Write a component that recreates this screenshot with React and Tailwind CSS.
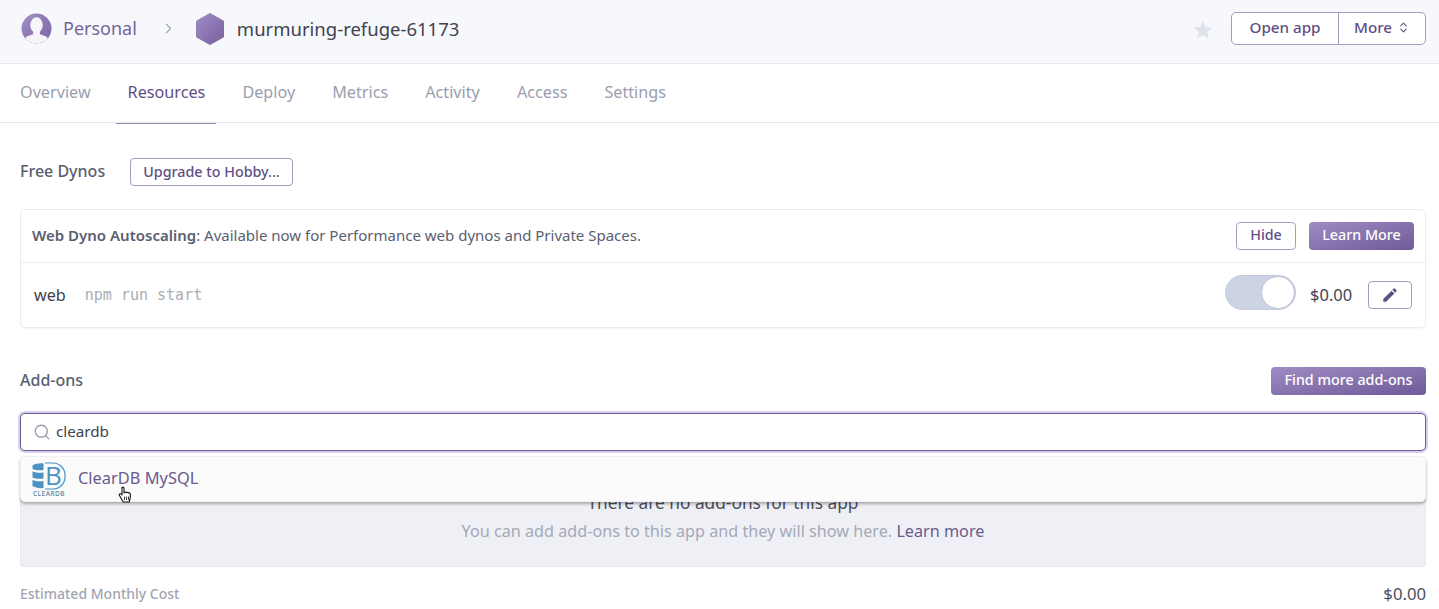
import React from "react";
import { ChevronRight, ChevronsUpDown, Search } from "lucide-react";
import { MdEdit } from "react-icons/md";

const tabs = ["Overview", "Resources", "Deploy", "Metrics", "Activity", "Access", "Settings"];

const purpleBtn =
  "rounded-[4px] bg-gradient-to-br from-[#a08cc4] to-[#6f5a98] text-white text-[14.300px] font-medium flex items-center justify-center pb-[2px]";
const outlineBtn =
  "rounded-[4px] border border-[#a79cc0] bg-white text-[#5f4f85] text-[14.300px] font-medium flex items-center justify-center";

const Avatar = () => (
  <svg width="31" height="31" viewBox="0 0 32 32" className="shrink-0">
    <defs>
      <linearGradient id="av" x1="0" y1="0" x2="1" y2="1">
        <stop offset="0" stopColor="#a48fc6" />
        <stop offset="1" stopColor="#7a63a3" />
      </linearGradient>
      <clipPath id="avc">
        <circle cx="16" cy="16" r="15.5" />
      </clipPath>
    </defs>
    <circle cx="16" cy="16" r="15.5" fill="url(#av)" />
    <g clipPath="url(#avc)" fill="#f6f5fa">
      <ellipse cx="16" cy="12.500" rx="6.500" ry="8" />
      <path d="M12.500 18h7v4c3 1.500 6.500 1.500 8 3.500v7h-23v-7c1.500-2 5-2 8-3.500z" />
    </g>
  </svg>
);

const Hexagon = () => (
  <svg width="30" height="32" viewBox="0 0 30 32" className="shrink-0">
    <defs>
      <linearGradient id="hex" x1="0" y1="0" x2="1" y2="1">
        <stop offset="0" stopColor="#a08cc4" />
        <stop offset="1" stopColor="#76609f" />
      </linearGradient>
    </defs>
    <path d="M15 0.500 28.500 8v16L15 31.500 1.500 24V8z" fill="url(#hex)" strokeLinejoin="round" stroke="url(#hex)" />
  </svg>
);

const ClearDbLogo = () => (
  <div className="relative w-[34px] h-[36px] shrink-0">
    <svg width="34" height="28" viewBox="0 0 34 28" className="absolute left-0 top-0">
      <path d="M13 1h8a12 12 0 0 1 12 12v2a12 12 0 0 1-12 12H13" fill="none" stroke="#4a93c2" strokeWidth="1.200" />
      <g fill="#4a93c2">
        <path d="M0.500 3.500c2-1.500 7-2.500 11-2v6.500c-4 .6-8.500.2-11-1z" />
        <path d="M0.500 9.500c3 1.200 7.500 1.500 11 1v6c-4 .6-8.500.2-11-1z" />
        <path d="M0.500 18c3 1.200 7.500 1.500 11 1v7c-4 .5-9-.5-11-2z" />
      </g>
    </svg>
    <span className="absolute left-[13px] top-0 text-[26px] leading-[26px] text-[#4a93c2] font-['Open_Sans',sans-serif]">B</span>
    <span className="absolute left-[-1px] top-[28px] w-[36px] text-center text-[6.500px] leading-[8px] tracking-[0.5px] font-medium text-[#5d7f98]">CLEARDB</span>
  </div>
);

const HandCursor = () => (
  <svg width="15" height="18" viewBox="0 0 15 18" className="absolute left-[118px] top-[486px]">
    <path
      d="M4 1.500c.8-.8 2-.4 2 .8V7l.5-.6c.6-.5 1.500-.4 1.900.2.600-.5 1.500-.3 1.900.3.700-.4 1.700-.1 1.900.8.300 1.800.2 4-.4 5.800l-.6 2.500H5.200L1.500 9.500c-.6-1-.1-1.800.8-1.800.5 0 1 .3 1.700 1.100z"
      fill="#fff"
      stroke="#111"
      strokeWidth="1.100"
      strokeLinejoin="round"
    />
    <path d="M6.500 10.500v3.500M8.500 10.500v3.500M10.500 10.500v3.500" stroke="#111" strokeWidth="0.800" />
  </svg>
);

const App = () => {
  return (
    <div className="relative w-[1439px] h-[609px] overflow-hidden bg-white font-['Noto_Sans',sans-serif]">
      {/* app header */}
      <header className="h-[64px] bg-[#f7f8fb] border-b border-[#e6e8ee] flex items-center pl-[21px] pr-[13px] pb-[6px]">
        <Avatar />
        <span className="ml-[11px] text-[18px] text-[#75649b]">Personal</span>
        <ChevronRight size={17} strokeWidth={1.500} className="ml-[23px] text-[#9fa4b2]" />
        <div className="ml-[18px]">
          <Hexagon />
        </div>
        <span className="ml-[12px] text-[18.500px] text-[#3f4350]">murmuring-refuge-61173</span>
        <div className="ml-auto flex items-center">
          <svg width="20" height="20" viewBox="0 0 20 20" className="mr-[18px] mt-[2px]">
            <path d="M10 1l2.700 6.100 6.600.6-5 4.400 1.500 6.500L10 15.200 4.200 18.600l1.500-6.500-5-4.400 6.600-.6z" fill="#dfe2eb" />
          </svg>
          <div className="flex h-[33px] rounded-[5px] border border-[#a79cc0] bg-white text-[15.200px] font-medium text-[#5f4f85]">
            <span className="w-[107px] flex items-center justify-center border-r border-[#a79cc0] pb-[2px]">Open app</span>
            <span className="w-[86px] flex items-center justify-center gap-[5px] pb-[2px]">
              More <ChevronsUpDown size={13} strokeWidth={2} />
            </span>
          </div>
        </div>
      </header>

      {/* tabs */}
      <nav className="h-[59px] border-b border-[#e6e8ee] flex pl-[20px] gap-[37px] text-[16.200px] text-[#9a9eae]">
        {tabs.map((t) => (
          <div key={t} className={"relative flex items-center h-[59px] pb-[2px] " + (t === "Resources" ? "text-[#5f4f85]" : "")}>
            {t}
            {t === "Resources" && <div className="absolute left-[-12px] right-[-11px] bottom-[-1px] h-px bg-[#9b8cb8]" />}
          </div>
        ))}
      </nav>

      <main className="pl-[20px] pr-[13px]">
        {/* dynos */}
        <div className="mt-[35px] flex items-center h-[28px]">
          <h2 className="w-[86px] pb-[2px] text-[16px] font-medium text-[#596070] whitespace-nowrap">Free Dynos</h2>
          <button className={outlineBtn + " ml-[24px] w-[163px] h-[28px]"}>Upgrade to Hobby...</button>
        </div>

        <section className="mt-[23px] h-[119px] rounded-[5px] border border-[#e9ebf0] shadow-[0_1px_1px_rgba(0,0,0,0.03)]">
          <div className="h-[53px] border-b border-[#eceef2] flex items-center pl-[11px] pr-[11px] text-[15px] text-[#596070]">
            <span className="pb-[1px]">
              <b className="font-semibold">Web Dyno Autoscaling</b>: Available now for Performance web dynos and Private Spaces.
            </span>
            <button className={outlineBtn + " ml-auto w-[60px] h-[28px] pb-[2px]"}>Hide</button>
            <button className={purpleBtn + " ml-[13px] w-[105px] h-[28px]"}>Learn More</button>
          </div>
          <div className="h-[64px] flex items-center pl-[13px] pr-[13px]">
            <span className="text-[16.200px] text-[#3f4350]">web</span>
            <span className="ml-[19px] text-[15px] text-[#a9adb5] font-['DejaVu_Sans_Mono',monospace]">npm run start</span>
            <div className="ml-auto mb-[5px] w-[71px] h-[35px] rounded-full bg-[#ccd4e3] border border-[#c3cbdc] flex justify-end">
              <div className="w-[34px] h-[33px] rounded-full bg-white border border-[#b9c2d5]" />
            </div>
            <span className="ml-[14px] w-[45px] text-[16.500px] text-[#3f4350]">$0.00</span>
            <button className={outlineBtn + " ml-[13px] w-[44px] h-[28px]"}>
              <MdEdit size={18} />
            </button>
          </div>
        </section>

        {/* add-ons */}
        <div className="mt-[39px] flex items-center justify-between h-[28px]">
          <h2 className="pb-[2px] text-[16px] font-medium text-[#596070]">Add-ons</h2>
          <button className={purpleBtn + " w-[155px] h-[28px]"}>Find more add-ons</button>
        </div>

        <div className="relative mt-[18px]">
          <div className="h-[38px] rounded-[5px] border-[1.500px] border-[#6f5a98] bg-white ring-2 ring-[#d8cfe8] flex items-center pl-[12px] text-[15.200px] text-[#3f4350]">
            <Search size={18} strokeWidth={1.800} className="text-[#9a9eae]" />
            <span className="ml-[5px] pb-[2px]">cleardb</span>
          </div>
          <div className="absolute z-10 left-0 right-0 top-[43px] h-[46px] rounded-[5px] bg-[#fbfbfb] border border-[#f0f0f2] shadow-[0_2px_3px_rgba(0,0,0,0.3)] flex items-center pl-[11px] pt-[1px]">
            <ClearDbLogo />
            <span className="ml-[12px] text-[16.400px] text-[#6a5a8f] pb-[2px]">ClearDB MySQL</span>
          </div>
        </div>

        <section className="mt-[11px] h-[105px] rounded-[3px] bg-[#eef0f5] border border-[#e7e9ef] text-center pt-[28px]">
          <p className="text-[17.300px] leading-[24px] text-[#4b4f5c]">There are no add-ons for this app</p>
          <p className="mt-[4px] text-[16.200px] leading-[24px] text-[#a5a9b7]">
            You can add add-ons to this app and they will show here. <span className="text-[#6a5a8f]">Learn more</span>
          </p>
        </section>

        <div className="mt-[16px] flex items-center justify-between h-[22px]">
          <span className="pb-[2px] text-[14px] font-medium text-[#a1a5b3]">Estimated Monthly Cost</span>
          <span className="text-[16.700px] text-[#4b4f5c]">$0.00</span>
        </div>
      </main>
      <div className="absolute inset-0 z-20 pointer-events-none">
        <HandCursor />
      </div>
    </div>
  );
};

export default App;
